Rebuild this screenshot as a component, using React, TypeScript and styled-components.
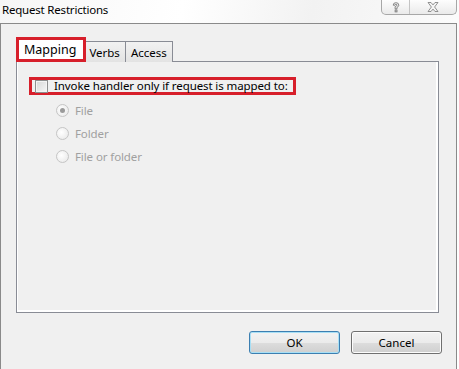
import React from "react";
import styled, { createGlobalStyle, css } from "styled-components";

const GlobalStyle = createGlobalStyle`
  html, body {
    margin: 0;
    padding: 0;
    background: #ffffff;
  }
  body {
    font-family: "Noto Sans", "Open Sans", "Liberation Sans", sans-serif;
    font-size: 11.5px;
    color: #000;
  }
`;

const Window = styled.div`
  width: 459px;
  height: 369px;
  overflow: hidden;
  background: linear-gradient(100deg, #f6f6f6 0%, #ffffff 35%, #f2f2f2 60%, #ffffff 100%);
  display: flex;
  flex-direction: column;
`;

const TitleBar = styled.div`
  height: 23px;
  display: flex;
  align-items: flex-start;
  justify-content: space-between;
  padding-right: 2px;
`;

const Title = styled.div`
  padding: 2px 0 0 2px;
  font-size: 11.5px;
  line-height: 16px;
  letter-spacing: -0.2px;
  color: #000;
`;

const CaptionGroup = styled.div`
  display: flex;
  height: 14px;
  border: 1px solid #a7a7a7;
  border-top: none;
  border-radius: 0 0 5px 5px;
  background: linear-gradient(#fdfdfd, #eaeaea);
  overflow: hidden;
`;

const CaptionButton = styled.div<{ $wide?: boolean }>`
  width: ${p => (p.$wide ? 46 : 27)}px;
  display: flex;
  align-items: center;
  justify-content: center;
  & + & {
    border-left: 1px solid #c4c4c4;
  }
`;

const Client = styled.div`
  flex: 1;
  width: 440px;
  border: 1px solid #8a8a8a;
  border-bottom: none;
  background: #f0f0f0;
  display: flex;
  flex-direction: column;
  padding: 13px 0 0 15px;
`;

const TabStrip = styled.div`
  display: flex;
  align-items: flex-end;
  height: 25px;
  position: relative;
  z-index: 1;
`;

const Tab = styled.div<{ $active?: boolean }>`
  box-sizing: border-box;
  height: 21px;
  padding: 0 5px;
  display: flex;
  align-items: center;
  border: 1px solid #898c95;
  border-bottom: none;
  background: linear-gradient(#f2f2f2, #e3e3e3);
  margin-left: -1px;
  color: #000;
  ${p =>
    p.$active &&
    css`
      height: 25px;
      margin-left: 0;
      margin-right: -2px;
      padding: 0 7px 1px 5px;
      border: 3px solid #d71f2b;
      background: #ffffff;
      position: relative;
      z-index: 2;
      font-size: 12.5px;
    `};
`;

const Pane = styled.div`
  box-sizing: border-box;
  width: 423px;
  height: 252px;
  margin-top: -1px;
  border: 1px solid #898c95;
  box-shadow: inset 1px 0 0 #ffffff, inset 0 -2px 0 #ffffff, inset -2px 0 0 #ffffff;
  background: #f0f0f0;
  padding: 15px 0 0 12px;
  display: flex;
  flex-direction: column;
`;

const Highlight = styled.div`
  box-sizing: border-box;
  align-self: flex-start;
  height: 18px;
  display: flex;
  align-items: center;
  gap: 6px;
  border: 3px solid #d71f2b;
  padding: 0 5px 0 3px;
`;

const CheckBox = styled.span`
  box-sizing: border-box;
  width: 13px;
  height: 13px;
  border: 1px solid #8e8f8f;
  background: linear-gradient(135deg, #d6d6d6, #f7f7f7);
  box-shadow: inset 0 0 0 1px #f4f4f4;
`;

const Label = styled.span<{ $disabled?: boolean }>`
  line-height: 14px;
  color: ${p => (p.$disabled ? "#a0a0a0" : "#000")};
  letter-spacing: -0.1px;
`;

const RadioList = styled.div`
  display: flex;
  flex-direction: column;
  gap: 6px;
  padding: 7px 0 0 27px;
`;

const RadioRow = styled.div`
  display: flex;
  align-items: center;
  gap: 6px;
  height: 17px;
`;

const Radio = styled.span<{ $checked?: boolean }>`
  box-sizing: border-box;
  width: 13px;
  height: 13px;
  border-radius: 50%;
  border: 1px solid #c5c5c5;
  background: radial-gradient(circle at 40% 40%, #ffffff, #e6e6e6);
  display: flex;
  align-items: center;
  justify-content: center;
  &::after {
    content: "";
    width: 5px;
    height: 5px;
    border-radius: 50%;
    background: ${p => (p.$checked ? "#9a9a9a" : "transparent")};
  }
`;

const ButtonRow = styled.div`
  display: flex;
  justify-content: flex-end;
  gap: 11px;
  padding: 18px 0 0 0;
  width: 426px;
`;

const Button = styled.button<{ $default?: boolean }>`
  box-sizing: border-box;
  width: 91px;
  height: 23px;
  font-family: inherit;
  font-size: 11.5px;
  color: #000;
  border-radius: 3px;
  border: 1px solid ${p => (p.$default ? "#3c7fb1" : "#707070")};
  background: linear-gradient(#f2f2f2 0%, #ebebeb 50%, #dddddd 51%, #cfcfcf 100%);
  box-shadow: inset 0 0 0 1px ${p => (p.$default ? "#a8dff5" : "#fcfcfc")};
  padding: 0;
`;

export default function App() {
  return (
    <>
      <GlobalStyle />
      <Window>
        <TitleBar>
          <Title>Request Restrictions</Title>
          <CaptionGroup>
            <CaptionButton>
              <svg width="8" height="11" viewBox="0 0 8 11">
                <path d="M1.2 3.2 Q1.2 0.7 4 0.7 Q6.8 0.7 6.8 3.2 Q6.8 4.6 5 5.3 L5 6.9 L3.1 6.9 L3.1 4.6 Q5 4 5 3.2 Q5 2.3 4 2.3 Q3 2.3 3 3.2 Z" fill="none" stroke="#6f6f6f" strokeWidth="0.8" />
                <rect x="3.1" y="8" width="1.9" height="1.9" fill="none" stroke="#6f6f6f" strokeWidth="0.8" />
              </svg>
            </CaptionButton>
            <CaptionButton $wide>
              <svg width="12" height="10" viewBox="0 0 12 10">
                <path d="M1 0.5 L4 0.5 L6 2.9 L8 0.5 L11 0.5 L7.6 5 L11 9.5 L8 9.5 L6 7.1 L4 9.5 L1 9.5 L4.4 5 Z" fill="#f4f4f4" stroke="#7a7a7a" strokeWidth="0.8" />
              </svg>
            </CaptionButton>
          </CaptionGroup>
        </TitleBar>
        <Client>
          <TabStrip>
            <Tab $active>Mapping</Tab>
            <Tab>Verbs</Tab>
            <Tab>Access</Tab>
          </TabStrip>
          <Pane>
            <Highlight>
              <CheckBox />
              <Label>Invoke handler only if request is mapped to:</Label>
            </Highlight>
            <RadioList>
              <RadioRow>
                <Radio $checked />
                <Label $disabled>File</Label>
              </RadioRow>
              <RadioRow>
                <Radio />
                <Label $disabled>Folder</Label>
              </RadioRow>
              <RadioRow>
                <Radio />
                <Label $disabled>File or folder</Label>
              </RadioRow>
            </RadioList>
          </Pane>
          <ButtonRow>
            <Button $default>OK</Button>
            <Button>Cancel</Button>
          </ButtonRow>
        </Client>
      </Window>
    </>
  );
}
